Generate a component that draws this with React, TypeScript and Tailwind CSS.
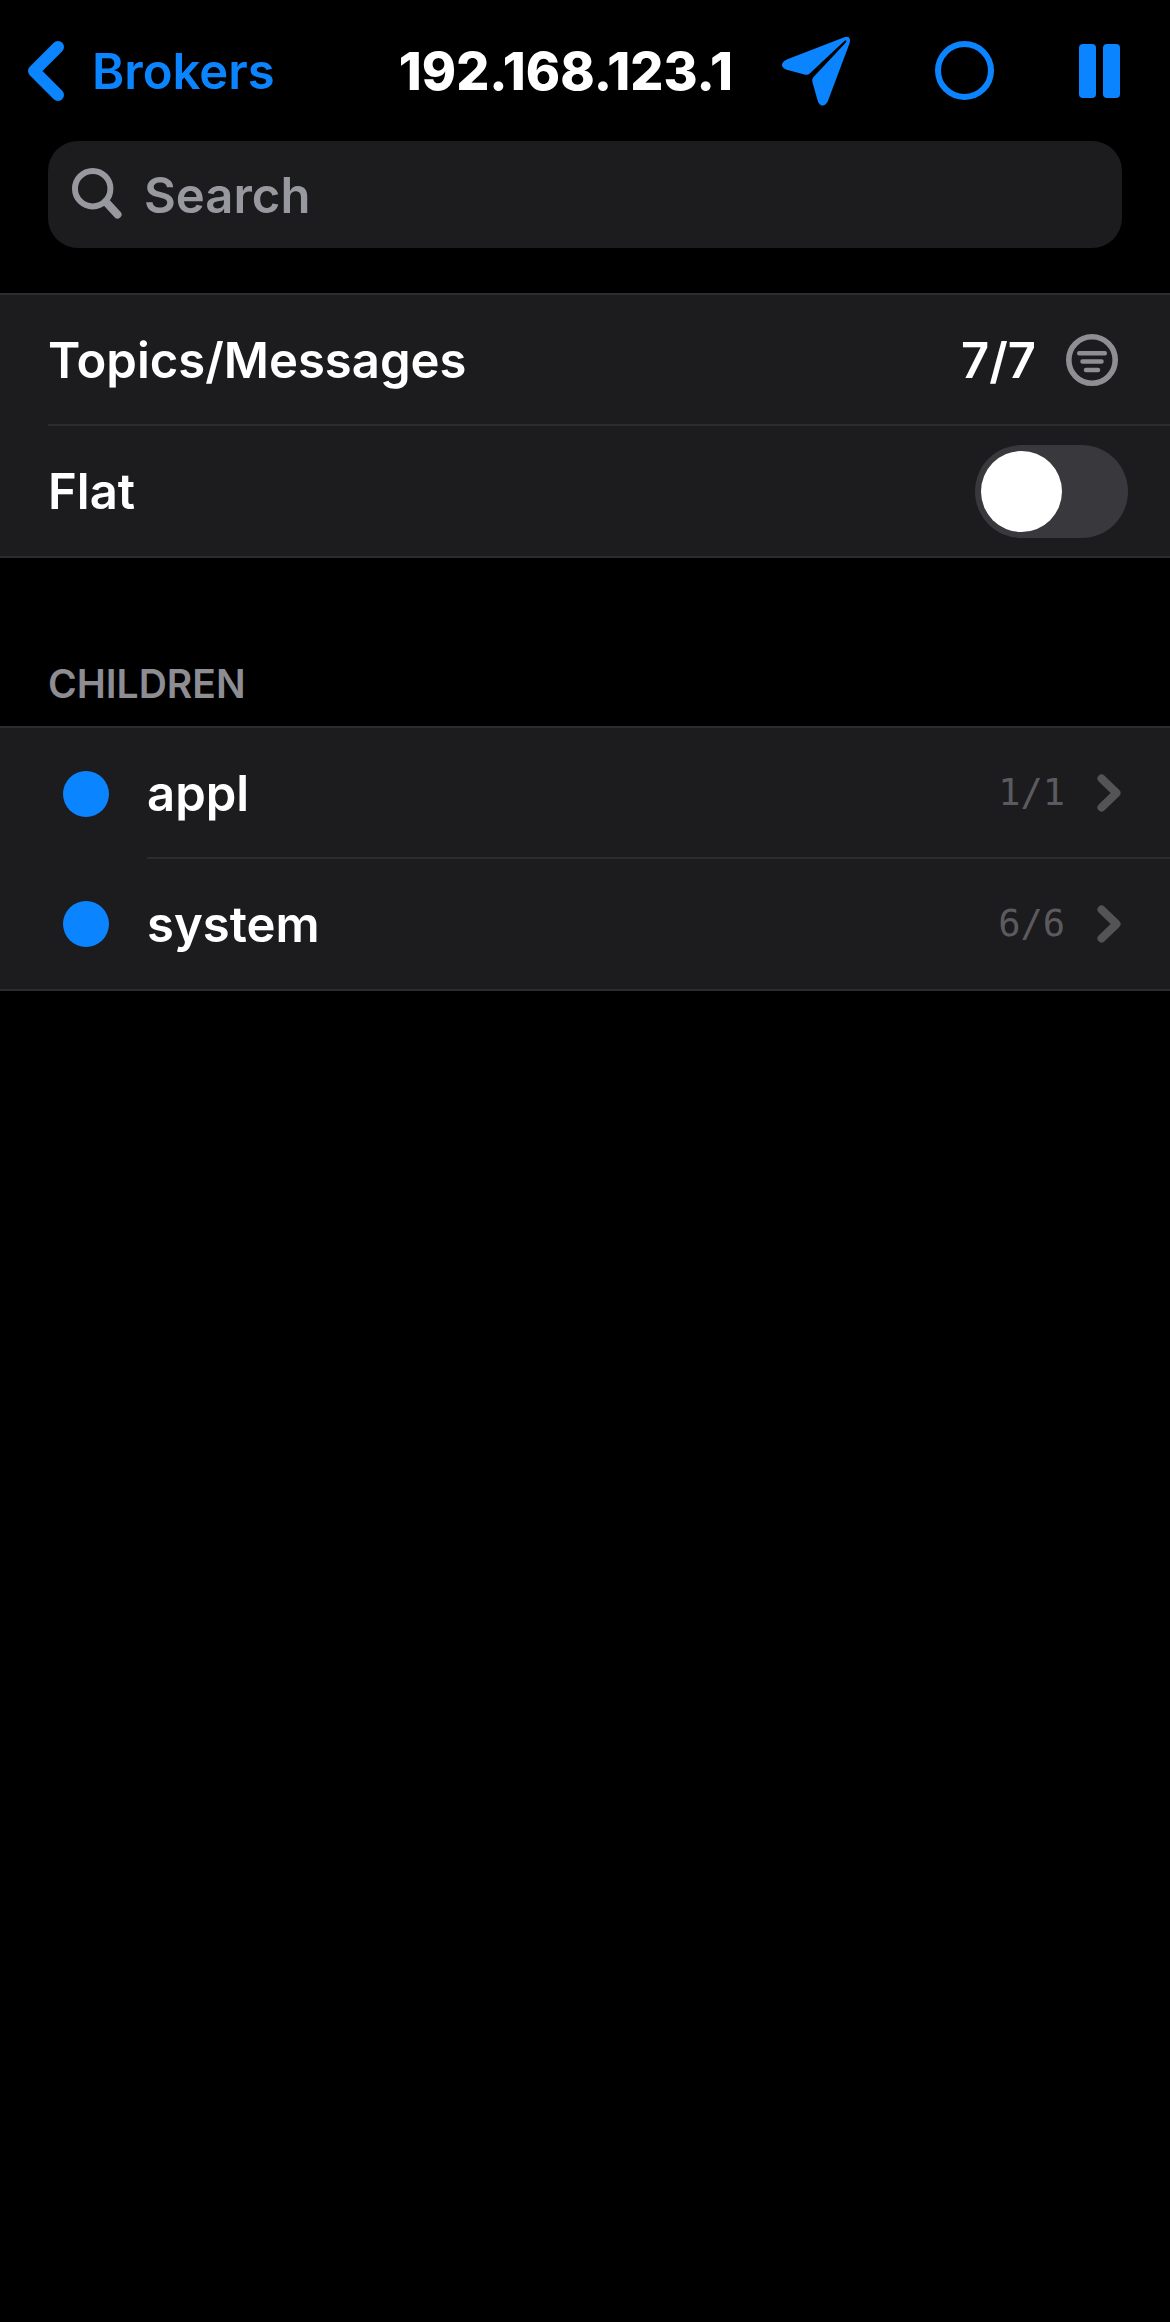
import { useState } from "react";

type Topic = { name: string; count: string };

const topics: Topic[] = [
  { name: "appl", count: "1/1" },
  { name: "system", count: "6/6" },
];

function BackIcon() {
  return (
    <svg width="36" height="60" viewBox="0 0 36 60" fill="none" stroke="currentColor" strokeWidth="12" strokeLinecap="round" strokeLinejoin="round" aria-hidden="true">
      <path d="M30 6 6 30 30 54" />
    </svg>
  );
}

function PlaneIcon() {
  return (
    <svg className="overflow-visible" width="68" height="69" viewBox="66 49 204 207" fill="currentColor" aria-hidden="true">
      <path d="M255 52 82 119C61 128 61 144 80 150L136 165Q144 167 150 161L254 63Q258 60 259 63Q260 66 257 69L160 173Q155 178 157 186L173 243C178 262 197 262 204 243L269 70Q272 58 266 53Q261 50 255 52Z" />
    </svg>
  );
}

function CircleIcon() {
  return (
    <svg width="59" height="59" viewBox="0 0 59 59" fill="none" stroke="currentColor" strokeWidth="6" aria-hidden="true">
      <circle cx="29.5" cy="29.5" r="26.5" />
    </svg>
  );
}

function PauseIcon() {
  return (
    <svg width="41" height="54" viewBox="0 0 41 54" fill="currentColor" aria-hidden="true">
      <rect width="17" height="54" rx="4" />
      <rect x="24" width="17" height="54" rx="4" />
    </svg>
  );
}

function SearchIcon() {
  return (
    <svg className="shrink-0" width="50" height="53" viewBox="0 0 50 53" fill="none" stroke="currentColor" strokeLinecap="round" aria-hidden="true">
      <circle cx="20.7" cy="20.7" r="17.7" strokeWidth="6" />
      <path d="M34 34 45.5 46.5" strokeWidth="8" />
    </svg>
  );
}

function FilterIcon() {
  return (
    <svg width="52" height="52" viewBox="0 0 52 52" fill="none" stroke="currentColor" strokeLinecap="round" aria-hidden="true">
      <circle cx="26" cy="26" r="23.2" strokeWidth="5.6" />
      <path d="M13.2 19.3H38.8M16.5 27.5H35.5M20 36H32" strokeWidth="4.5" />
    </svg>
  );
}

function ChevronIcon() {
  return (
    <svg className="shrink-0 text-[#545456]" width="24" height="38" viewBox="0 0 24 38" fill="none" stroke="currentColor" strokeWidth="8" strokeLinecap="round" strokeLinejoin="round" aria-hidden="true">
      <path d="M4.5 4.5 19.5 19 4.5 33.5" />
    </svg>
  );
}

export default function App() {
  const [flat, setFlat] = useState(false);
  const [query, setQuery] = useState("");

  return (
    <div className="min-h-screen bg-black pb-4 font-['Inter',sans-serif] text-[49px] leading-[60px] font-semibold text-white">
      <header className="flex h-[141px] items-center justify-between pr-[50px] pl-7 text-[#0a84ff]">
        <a href="#brokers" className="flex items-center gap-7">
          <BackIcon />
          <span className="pt-0.5">Brokers</span>
        </a>
        <div className="flex items-center">
          <h1 className="mr-[49px] pt-0.5 text-[52px] font-extrabold text-white">192.168.123.1</h1>
          <button type="button" aria-label="Publish" className="mr-[85px]">
            <PlaneIcon />
          </button>
          <button type="button" aria-label="Disconnect" className="mr-[85px]">
            <CircleIcon />
          </button>
          <button type="button" aria-label="Pause">
            <PauseIcon />
          </button>
        </div>
      </header>

      <main>
        <label className="mx-12 flex h-[107px] items-center gap-[22px] rounded-[30px] bg-[#1c1c1e] px-6 text-[#98989f]">
          <SearchIcon />
          <input
            type="text"
            aria-label="Search"
            placeholder="Search"
            value={query}
            onChange={(e) => setQuery(e.target.value)}
            className="w-full bg-transparent pt-0.5 text-white outline-none placeholder:text-[#98989f]"
          />
        </label>

        <section className="mt-[45px] border-y-2 border-[#2c2c2e] bg-[#1c1c1e] pl-12">
          <div className="flex h-[131px] items-center justify-between border-b-2 border-[#2c2c2e] pr-[52px]">
            <span className="pt-0.5">Topics/Messages</span>
            <span className="flex items-center gap-[30px]">
              <span className="pt-0.5">7/7</span>
              <button type="button" aria-label="Filter" className="text-[#8e8e93]">
                <FilterIcon />
              </button>
            </span>
          </div>
          <label className="flex h-[130px] items-center justify-between pr-[42px]">
            <span className="pt-0.5">Flat</span>
            <input
              type="checkbox"
              role="switch"
              checked={flat}
              onChange={(e) => setFlat(e.target.checked)}
              className="flex h-[93px] w-[153px] appearance-none items-center rounded-full bg-[#39393d] px-1.5 before:size-[81px] before:rounded-full before:bg-white checked:justify-end checked:bg-[#30d158]"
            />
          </label>
        </section>

        <section className="mt-[102px]">
          <h2 className="px-12 pb-[18px] text-[39px] leading-[48px] text-[#8d8d93]">CHILDREN</h2>
          <ul className="border-y-2 border-[#2c2c2e] bg-[#1c1c1e]">
            {topics.map((topic) => (
              <li key={topic.name}>
                <a href={"#" + topic.name} className="flex items-center pl-[63px]">
                  <span className="mr-[38px] size-[46px] shrink-0 rounded-full bg-[#0a84ff]" />
                  <span className="flex h-[131px] grow items-center border-b-2 border-[#2c2c2e] pr-[49px] [li:last-child_&]:h-[130px] [li:last-child_&]:border-b-0">
                    <span className="grow pt-0.5">{topic.name}</span>
                    <span className="mr-8 font-['DejaVu_Sans_Mono',monospace] text-[37px] font-normal text-[#5b5b5f]">{topic.count}</span>
                    <ChevronIcon />
                  </span>
                </a>
              </li>
            ))}
          </ul>
        </section>
      </main>
    </div>
  );
}
